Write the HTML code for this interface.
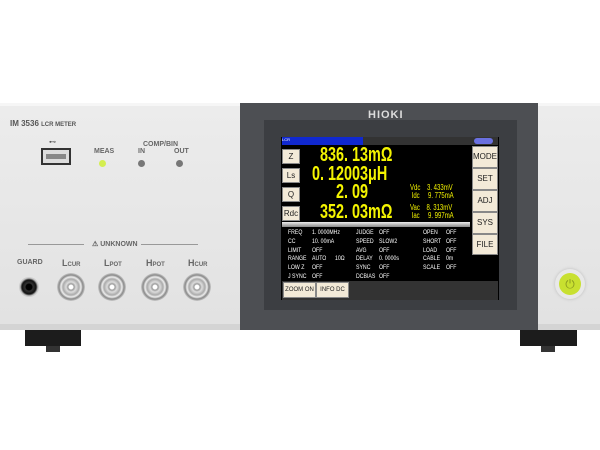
<!DOCTYPE html>
<html><head><meta charset="utf-8"><style>
*{margin:0;padding:0;box-sizing:border-box}
body{width:600px;height:450px;background:#fff;position:relative;overflow:hidden;font-family:"Liberation Sans",sans-serif}
.a{position:absolute}
.panel{background:linear-gradient(#ececec,#e2e2e2);border-top:3px solid #f6f6f6;border-bottom:6px solid #d4d4d4}
.lbl{font-size:7px;font-weight:bold;color:#666;position:absolute;white-space:nowrap}
.bnc{position:absolute;width:28px;height:28px;border-radius:50%;background:radial-gradient(circle,#fff 0 2px,#999 3px,#ddd 5px,#aaa 8px,#eee 10px,#888 12px,#ccc 14px)}
.scr{background:#000}
.btn{position:absolute;background:#f3ead8;color:#222;font-size:8px;text-align:center;border:1px solid #888;white-space:nowrap}
.val{position:absolute;color:#f4f400;font-weight:bold;font-size:20px;transform:scaleX(0.72);transform-origin:0 0;white-space:nowrap}
.inf{position:absolute;font-size:6.5px;color:#fff;transform:scaleX(0.8);transform-origin:0 0;white-space:nowrap}
.sm{position:absolute;color:#f4f400;font-size:8px;transform:scaleX(0.75);transform-origin:0 0;white-space:nowrap;line-height:8px}
</style></head><body>
<div class="a panel" style="left:0;top:103px;width:240px;height:227px"></div>
<div class="a" style="left:10px;top:119px;font-size:8px;font-weight:bold;color:#555">IM 3536 <span style="font-size:6px">LCR METER</span></div>
<div class="a" style="left:49px;top:138px;font-size:7px;color:#555">⊷</div>
<div class="a" style="left:41px;top:148px;width:30px;height:17px;background:#ddd;border:2px solid #333"></div>
<div class="a" style="left:46px;top:154px;width:20px;height:5px;background:#888"></div>
<div class="lbl" style="left:94px;top:148px">MEAS</div>
<div class="a" style="left:99px;top:160px;width:7px;height:7px;border-radius:50%;background:#d4ee50"></div>
<div class="lbl" style="left:143px;top:141px">COMP/BIN</div>
<div class="lbl" style="left:138px;top:148px">IN</div>
<div class="lbl" style="left:174px;top:148px">OUT</div>
<div class="a" style="left:138px;top:160px;width:7px;height:7px;border-radius:50%;background:#777"></div>
<div class="a" style="left:176px;top:160px;width:7px;height:7px;border-radius:50%;background:#777"></div>
<div class="a" style="left:28px;top:244px;width:56px;height:1px;background:#999"></div>
<div class="a" style="left:141px;top:244px;width:57px;height:1px;background:#999"></div>
<div class="lbl" style="left:92px;top:240px">⚠ UNKNOWN</div>
<div class="lbl" style="left:17px;top:259px">GUARD</div>
<div class="lbl" style="left:62px;top:258px;font-size:9px">L<span style="font-size:6px">CUR</span></div>
<div class="lbl" style="left:104px;top:258px;font-size:9px">L<span style="font-size:6px">POT</span></div>
<div class="lbl" style="left:146px;top:258px;font-size:9px">H<span style="font-size:6px">POT</span></div>
<div class="lbl" style="left:188px;top:258px;font-size:9px">H<span style="font-size:6px">CUR</span></div>
<div class="a" style="left:19px;top:277px;width:20px;height:20px;border-radius:50%;background:radial-gradient(circle,#000 0 3px,#333 4px,#111 7px,#ccc 9px)"></div>
<div class="bnc" style="left:57px;top:273px"></div>
<div class="bnc" style="left:98px;top:273px"></div>
<div class="bnc" style="left:141px;top:273px"></div>
<div class="bnc" style="left:183px;top:273px"></div>
<div class="a panel" style="left:538px;top:103px;width:62px;height:227px"></div>
<div class="a" style="left:555px;top:269px;width:30px;height:30px;border-radius:50%;background:#e8e8e8;box-shadow:0 0 3px #bbb"></div>
<div class="a" style="left:559px;top:273px;width:22px;height:22px;border-radius:50%;background:#c8e030;color:#8a9a20;font-size:12px;text-align:center;line-height:22px">⏻</div>
<div class="a" style="left:240px;top:103px;width:298px;height:227px;background:#4d4f53"></div>
<div class="a" style="left:264px;top:120px;width:253px;height:190px;background:#3c3e42"></div>
<div class="a" style="left:368px;top:109px;font-size:11px;font-weight:bold;color:#ddd;letter-spacing:1px">HIOKI</div>
<div class="a scr" style="left:281px;top:137px;width:218px;height:163px"></div>
<div class="a" style="left:282px;top:137px;width:216px;height:8px;background:#333"></div>
<div class="a" style="left:282px;top:137px;width:81px;height:8px;background:#1028d0;font-size:4px;color:#fff">LCR</div>
<div class="a" style="left:474px;top:138px;width:19px;height:6px;border-radius:3px;background:#6a70e0"></div>
<div class="btn" style="left:282px;top:149px;width:18px;height:15px;line-height:13px">Z</div>
<div class="btn" style="left:282px;top:168px;width:18px;height:15px;line-height:13px">Ls</div>
<div class="btn" style="left:282px;top:187px;width:18px;height:15px;line-height:13px">Q</div>
<div class="btn" style="left:282px;top:206px;width:18px;height:15px;line-height:13px">Rdc</div>
<div class="val" style="left:320px;top:144px">836. 13mΩ</div>
<div class="val" style="left:312px;top:163px">0. 12003μH</div>
<div class="val" style="left:336px;top:181px">2. 09</div>
<div class="val" style="left:320px;top:201px">352. 03mΩ</div>
<div class="sm" style="left:410px;top:184px">Vdc &nbsp;&nbsp;&nbsp;3. 433mV<br>&nbsp;Idc &nbsp;&nbsp;&nbsp;&nbsp;9. 775mA</div>
<div class="sm" style="left:410px;top:204px">Vac &nbsp;&nbsp;&nbsp;8. 313mV<br>&nbsp;Iac &nbsp;&nbsp;&nbsp;&nbsp;9. 997mA</div>
<div class="btn" style="left:472px;top:146px;width:26px;height:22px;line-height:20px">MODE</div>
<div class="btn" style="left:472px;top:168px;width:26px;height:22px;line-height:20px">SET</div>
<div class="btn" style="left:472px;top:190px;width:26px;height:22px;line-height:20px">ADJ</div>
<div class="btn" style="left:472px;top:212px;width:26px;height:22px;line-height:20px">SYS</div>
<div class="btn" style="left:472px;top:234px;width:26px;height:21px;line-height:19px">FILE</div>
<div class="a" style="left:282px;top:222px;width:188px;height:5px;background:linear-gradient(#eee,#888)"></div>
<div class="a" style="left:282px;top:281px;width:216px;height:19px;background:#333"></div>
<div class="btn" style="left:283px;top:282px;width:33px;height:16px;line-height:14px;font-size:6px">ZOOM ON</div>
<div class="btn" style="left:316px;top:282px;width:33px;height:16px;line-height:14px;font-size:6px">INFO DC</div>
<div class="inf" style="left:288px;top:229px;line-height:8.8px">FREQ<br>CC<br>LIMIT<br>RANGE<br>LOW Z<br>J SYNC</div>
<div class="inf" style="left:312px;top:229px;line-height:8.8px">1. 0000MHz<br>10. 00mA<br>OFF<br>AUTO &nbsp;&nbsp;&nbsp;&nbsp;&nbsp;10Ω<br>OFF<br>OFF</div>
<div class="inf" style="left:356px;top:229px;line-height:8.8px">JUDGE<br>SPEED<br>AVG<br>DELAY<br>SYNC<br>DCBIAS</div>
<div class="inf" style="left:379px;top:229px;line-height:8.8px">OFF<br>SLOW2<br>OFF<br>0. 0000s<br>OFF<br>OFF</div>
<div class="inf" style="left:423px;top:229px;line-height:8.8px">OPEN<br>SHORT<br>LOAD<br>CABLE<br>SCALE</div>
<div class="inf" style="left:446px;top:229px;line-height:8.8px">OFF<br>OFF<br>OFF<br>0m<br>OFF</div>
<div class="a" style="left:25px;top:330px;width:56px;height:16px;background:#1c1c1c"></div>
<div class="a" style="left:46px;top:346px;width:14px;height:6px;background:#333"></div>
<div class="a" style="left:520px;top:330px;width:57px;height:16px;background:#1c1c1c"></div>
<div class="a" style="left:541px;top:346px;width:14px;height:6px;background:#333"></div>
</body></html>
